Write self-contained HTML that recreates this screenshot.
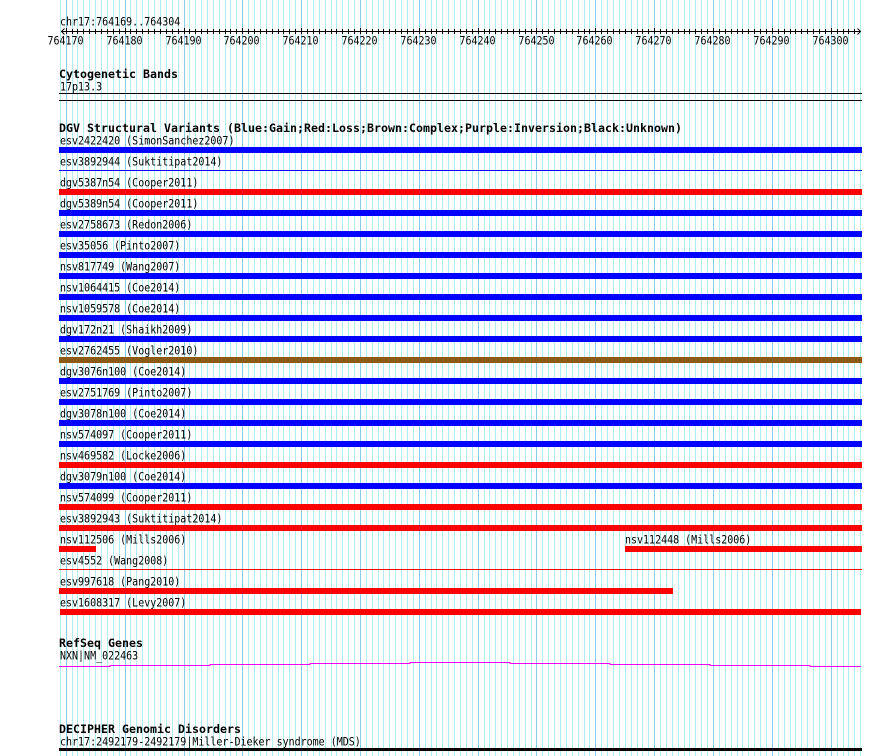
<!DOCTYPE html>
<html>
<head>
<meta charset="utf-8">
<title>chr17:764169..764304</title>
<style>
html,body{margin:0;padding:0;background:#fff;width:890px;height:756px;overflow:hidden}
svg{display:block}
text{font-family:"DejaVu Sans Mono","Liberation Mono",monospace;font-size:10px;fill:#000;white-space:pre;transform-box:fill-box;transform-origin:0 100%;transform:translateY(.8px) scaleY(1.12)}
.t{font-weight:bold;font-size:11.6px;letter-spacing:.02px;transform:none}
.c{text-anchor:middle}
</style>
</head>
<body>
<svg xmlns="http://www.w3.org/2000/svg" width="890" height="756" viewBox="0 0 890 756">
<rect width="890" height="756" fill="#fff"/>
<!-- grid -->
<path shape-rendering="crispEdges" stroke="#aeeeee" stroke-width="1" fill="none" d="M60.5 0V756M66.5 0V756M72.5 0V756M77.5 0V756M83.5 0V756M89.5 0V756M95.5 0V756M101.5 0V756M107.5 0V756M113.5 0V756M119.5 0V756M125.5 0V756M130.5 0V756M136.5 0V756M142.5 0V756M148.5 0V756M154.5 0V756M160.5 0V756M166.5 0V756M172.5 0V756M178.5 0V756M184.5 0V756M189.5 0V756M195.5 0V756M201.5 0V756M207.5 0V756M213.5 0V756M219.5 0V756M225.5 0V756M230.5 0V756M236.5 0V756M242.5 0V756M248.5 0V756M254.5 0V756M260.5 0V756M266.5 0V756M272.5 0V756M278.5 0V756M283.5 0V756M289.5 0V756M295.5 0V756M301.5 0V756M307.5 0V756M313.5 0V756M319.5 0V756M325.5 0V756M331.5 0V756M336.5 0V756M342.5 0V756M348.5 0V756M354.5 0V756M360.5 0V756M366.5 0V756M372.5 0V756M378.5 0V756M383.5 0V756M389.5 0V756M395.5 0V756M401.5 0V756M407.5 0V756M413.5 0V756M419.5 0V756M425.5 0V756M431.5 0V756M436.5 0V756M442.5 0V756M448.5 0V756M454.5 0V756M460.5 0V756M466.5 0V756M472.5 0V756M478.5 0V756M484.5 0V756M489.5 0V756M495.5 0V756M501.5 0V756M507.5 0V756M513.5 0V756M519.5 0V756M525.5 0V756M531.5 0V756M536.5 0V756M542.5 0V756M548.5 0V756M554.5 0V756M560.5 0V756M566.5 0V756M572.5 0V756M578.5 0V756M584.5 0V756M589.5 0V756M595.5 0V756M601.5 0V756M607.5 0V756M613.5 0V756M619.5 0V756M625.5 0V756M631.5 0V756M637.5 0V756M642.5 0V756M648.5 0V756M654.5 0V756M660.5 0V756M666.5 0V756M672.5 0V756M678.5 0V756M684.5 0V756M689.5 0V756M695.5 0V756M701.5 0V756M707.5 0V756M713.5 0V756M719.5 0V756M725.5 0V756M731.5 0V756M737.5 0V756M742.5 0V756M748.5 0V756M754.5 0V756M760.5 0V756M766.5 0V756M772.5 0V756M778.5 0V756M784.5 0V756M790.5 0V756M795.5 0V756M801.5 0V756M807.5 0V756M813.5 0V756M819.5 0V756M825.5 0V756M831.5 0V756M837.5 0V756M843.5 0V756M848.5 0V756M854.5 0V756M860.5 0V756"/>
<path shape-rendering="crispEdges" d="M66.5 0V756M125.5 0V756M184.5 0V756M242.5 0V756M301.5 0V756M360.5 0V756M419.5 0V756M478.5 0V756M536.5 0V756M595.5 0V756M654.5 0V756M713.5 0V756M772.5 0V756M831.5 0V756" stroke="#87ceeb" stroke-width="1" fill="none"/>

<!-- ruler -->
<text x="60" y="25">chr17:764169..764304</text>
<path d="M61 31.5H860M64.5 28.5L61.5 31.5L64.5 34.5M857.5 28.5L860.5 31.5L857.5 34.5" stroke="#000" stroke-width="1" fill="none"/>
<path shape-rendering="crispEdges" stroke="#000" stroke-width="1" fill="none" d="M66.5 28v6M72.5 29v5M77.5 29v5M83.5 29v5M89.5 29v5M95.5 29v5M101.5 29v5M107.5 29v5M113.5 29v5M119.5 29v5M125.5 28v6M130.5 29v5M136.5 29v5M142.5 29v5M148.5 29v5M154.5 29v5M160.5 29v5M166.5 29v5M172.5 29v5M178.5 29v5M184.5 28v6M189.5 29v5M195.5 29v5M201.5 29v5M207.5 29v5M213.5 29v5M219.5 29v5M225.5 29v5M230.5 29v5M236.5 29v5M242.5 28v6M248.5 29v5M254.5 29v5M260.5 29v5M266.5 29v5M272.5 29v5M278.5 29v5M283.5 29v5M289.5 29v5M295.5 29v5M301.5 28v6M307.5 29v5M313.5 29v5M319.5 29v5M325.5 29v5M331.5 29v5M336.5 29v5M342.5 29v5M348.5 29v5M354.5 29v5M360.5 28v6M366.5 29v5M372.5 29v5M378.5 29v5M383.5 29v5M389.5 29v5M395.5 29v5M401.5 29v5M407.5 29v5M413.5 29v5M419.5 28v6M425.5 29v5M431.5 29v5M436.5 29v5M442.5 29v5M448.5 29v5M454.5 29v5M460.5 29v5M466.5 29v5M472.5 29v5M478.5 28v6M484.5 29v5M489.5 29v5M495.5 29v5M501.5 29v5M507.5 29v5M513.5 29v5M519.5 29v5M525.5 29v5M531.5 29v5M536.5 28v6M542.5 29v5M548.5 29v5M554.5 29v5M560.5 29v5M566.5 29v5M572.5 29v5M578.5 29v5M584.5 29v5M589.5 29v5M595.5 28v6M601.5 29v5M607.5 29v5M613.5 29v5M619.5 29v5M625.5 29v5M631.5 29v5M637.5 29v5M642.5 29v5M648.5 29v5M654.5 28v6M660.5 29v5M666.5 29v5M672.5 29v5M678.5 29v5M684.5 29v5M689.5 29v5M695.5 29v5M701.5 29v5M707.5 29v5M713.5 28v6M719.5 29v5M725.5 29v5M731.5 29v5M737.5 29v5M742.5 29v5M748.5 29v5M754.5 29v5M760.5 29v5M766.5 29v5M772.5 28v6M778.5 29v5M784.5 29v5M790.5 29v5M795.5 29v5M801.5 29v5M807.5 29v5M813.5 29v5M819.5 29v5M825.5 29v5M831.5 28v6M837.5 29v5M843.5 29v5M848.5 29v5M854.5 29v5"/>
<text class="c" x="65.5" y="44">764170</text>
<text class="c" x="124.5" y="44">764180</text>
<text class="c" x="183.5" y="44">764190</text>
<text class="c" x="241.5" y="44">764200</text>
<text class="c" x="300.5" y="44">764210</text>
<text class="c" x="359.5" y="44">764220</text>
<text class="c" x="418.5" y="44">764230</text>
<text class="c" x="477.5" y="44">764240</text>
<text class="c" x="536.5" y="44">764250</text>
<text class="c" x="594.5" y="44">764260</text>
<text class="c" x="653.5" y="44">764270</text>
<text class="c" x="712.5" y="44">764280</text>
<text class="c" x="771.5" y="44">764290</text>
<text class="c" x="830.5" y="44">764300</text>

<!-- cytogenetic -->
<text class="t" x="59" y="78">Cytogenetic Bands</text>
<text x="60" y="90">17p13.3</text>
<rect x="59" y="93" width="803" height="1" fill="#000"/>
<rect x="59" y="100" width="803" height="1" fill="#000"/>

<!-- DGV -->
<text class="t" x="59" y="132">DGV Structural Variants (Blue:Gain;Red:Loss;Brown:Complex;Purple:Inversion;Black:Unknown)</text>

<g fill="#0000ff">
<rect x="59" y="147" width="803" height="6"/>
<rect x="59" y="170" width="803" height="1"/>
<rect x="59" y="210" width="803" height="6"/>
<rect x="59" y="231" width="803" height="6"/>
<rect x="59" y="252" width="803" height="6"/>
<rect x="59" y="273" width="803" height="6"/>
<rect x="59" y="294" width="803" height="6"/>
<rect x="59" y="315" width="803" height="6"/>
<rect x="59" y="336" width="803" height="6"/>
<rect x="59" y="378" width="803" height="6"/>
<rect x="59" y="399" width="803" height="6"/>
<rect x="59" y="420" width="803" height="6"/>
<rect x="59" y="441" width="803" height="6"/>
<rect x="59" y="483" width="803" height="6"/>
</g>
<rect x="59" y="357" width="803" height="6" fill="#8b5a14"/>
<g fill="#ff0000">
<rect x="59" y="189" width="803" height="6"/>
<rect x="59" y="462" width="803" height="6"/>
<rect x="59" y="504" width="803" height="6"/>
<rect x="59" y="525" width="803" height="6"/>
<rect x="59" y="546" width="37" height="6"/>
<rect x="625" y="546" width="237" height="6"/>
<rect x="59" y="569" width="803" height="1"/>
<rect x="59" y="588" width="614" height="6"/>
<rect x="60" y="609" width="801" height="6"/>
</g>

<text x="60" y="144">esv2422420 (SimonSanchez2007)</text>
<text x="60" y="165">esv3892944 (Suktitipat2014)</text>
<text x="60" y="186">dgv5387n54 (Cooper2011)</text>
<text x="60" y="207">dgv5389n54 (Cooper2011)</text>
<text x="60" y="228">esv2758673 (Redon2006)</text>
<text x="60" y="249">esv35056 (Pinto2007)</text>
<text x="60" y="270">nsv817749 (Wang2007)</text>
<text x="60" y="291">nsv1064415 (Coe2014)</text>
<text x="60" y="312">nsv1059578 (Coe2014)</text>
<text x="60" y="333">dgv172n21 (Shaikh2009)</text>
<text x="60" y="354">esv2762455 (Vogler2010)</text>
<text x="60" y="375">dgv3076n100 (Coe2014)</text>
<text x="60" y="396">esv2751769 (Pinto2007)</text>
<text x="60" y="417">dgv3078n100 (Coe2014)</text>
<text x="60" y="438">nsv574097 (Cooper2011)</text>
<text x="60" y="459">nsv469582 (Locke2006)</text>
<text x="60" y="480">dgv3079n100 (Coe2014)</text>
<text x="60" y="501">nsv574099 (Cooper2011)</text>
<text x="60" y="522">esv3892943 (Suktitipat2014)</text>
<text x="60" y="543">nsv112506 (Mills2006)</text>
<text x="625" y="543">nsv112448 (Mills2006)</text>
<text x="60" y="564">esv4552 (Wang2008)</text>
<text x="60" y="585">esv997618 (Pang2010)</text>
<text x="60" y="606">esv1608317 (Levy2007)</text>

<!-- RefSeq -->
<text class="t" x="59" y="647">RefSeq Genes</text>
<text x="60" y="659">NXN|NM_022463</text>
<path d="M59 666.5H110V665.5H210V664.5H310V663.5H410V662.5H510V663.5H610V664.5H710V665.5H810V666.5H861" stroke="#ff00ff" stroke-width="1" fill="none" shape-rendering="crispEdges"/>

<!-- DECIPHER -->
<text class="t" x="59" y="733">DECIPHER Genomic Disorders</text>
<text x="60" y="745">chr17:2492179-2492179|Miller-Dieker syndrome (MDS)</text>
<rect x="59" y="748" width="803" height="3" fill="#000"/>
</svg>
</body>
</html>
